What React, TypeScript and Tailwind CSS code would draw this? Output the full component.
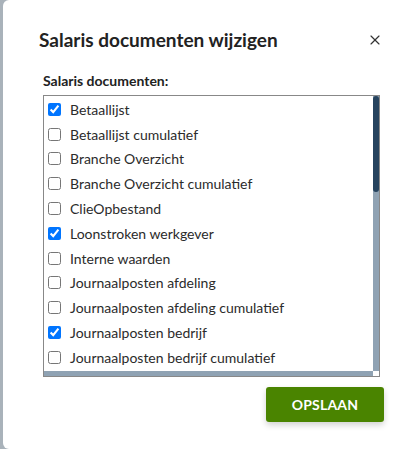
import { X } from "lucide-react";

const DOCUMENTS: { name: string; checked: boolean }[] = [
  { name: "Betaallijst", checked: true },
  { name: "Betaallijst cumulatief", checked: false },
  { name: "Branche Overzicht", checked: false },
  { name: "Branche Overzicht cumulatief", checked: false },
  { name: "ClieOpbestand", checked: false },
  { name: "Loonstroken werkgever", checked: true },
  { name: "Interne waarden", checked: false },
  { name: "Journaalposten afdeling", checked: false },
  { name: "Journaalposten afdeling cumulatief", checked: false },
  { name: "Journaalposten bedrijf", checked: true },
  { name: "Journaalposten bedrijf cumulatief", checked: false },
  { name: "Journaalposten kostenplaats", checked: false },
  { name: "Journaalposten kostenplaats cumulatief", checked: false },
  { name: "Kostenoverzicht", checked: false },
  { name: "Kostenoverzicht cumulatief", checked: false },
  { name: "Loonjournaal", checked: false },
  { name: "Loonjournaal cumulatief", checked: false },
  { name: "Loonstaat", checked: false },
  { name: "Loonstroken werknemer", checked: false },
  { name: "Mutatieoverzicht", checked: false },
  { name: "Pensioenoverzicht", checked: false },
  { name: "Reserveringen", checked: false },
  { name: "Reserveringen cumulatief", checked: false },
  { name: "Verzamelloonstaat", checked: false },
  { name: "Verzamelloonstaat cumulatief", checked: false },
  { name: "Werkgeverskosten", checked: false },
  { name: "Werkgeverskosten cumulatief", checked: false },
  { name: "Jaaropgaven", checked: false },
];

export default function App() {
  return (
    <div
      className="h-[449px] w-[418px] overflow-hidden bg-[#a9b2ba]"
      style={{ fontFamily: 'Lato, "Noto Sans", sans-serif' }}
    >
      <div className="ml-[3px] h-[449px] rounded-l-[6px] bg-white pl-[36px] pr-[34px]">
        <div className="flex items-center justify-between pt-[26px]">
          <h2 className="text-[19px] font-bold leading-[28px] text-[#222]">
            Salaris documenten wijzigen
          </h2>
          <button className="mr-[1px] text-[#333]">
            <X size={16} strokeWidth={1.75} />
          </button>
        </div>

        <p className="mt-[18px] pl-[4px] text-[14px] font-bold leading-[18px] text-[#222]">
          Salaris documenten:
        </p>

        {/* list box with drawn scrollbars */}
        <div className="mt-[5px] ml-[4px] flex w-[337px] flex-col border border-[#888]">
          <div className="flex h-[275px]">
            <ul className="flex-1 overflow-hidden pt-[1px]">
              {DOCUMENTS.map((d) => (
                <li key={d.name} className="flex h-[24.8px] items-center whitespace-nowrap">
                  <input
                    type="checkbox"
                    defaultChecked={d.checked}
                    className="ml-[4px] mr-[3px] h-[13px] w-[13px] accent-[#0075ff]"
                  />
                  <span className="ml-[6px] text-[14px] text-[#2b2b2b]">{d.name}</span>
                </li>
              ))}
            </ul>
            <div className="w-[6px] bg-[#8fa2b3]">
              <div className="h-[96px] rounded-full bg-[#26435e]" />
            </div>
          </div>
          <div className="flex h-[5px]">
            <div className="flex-1 bg-[#8fa2b3]" />
            <div className="w-[6px] bg-white" />
          </div>
        </div>

        <div className="mt-[10px] flex justify-end">
          <button className="h-[35px] w-[118px] rounded-[3px] bg-[#4a8400] text-[14px] font-bold tracking-[0.2px] text-white shadow-[0_3px_6px_rgba(0,0,0,0.18)]">
            OPSLAAN
          </button>
        </div>
      </div>
    </div>
  );
}
